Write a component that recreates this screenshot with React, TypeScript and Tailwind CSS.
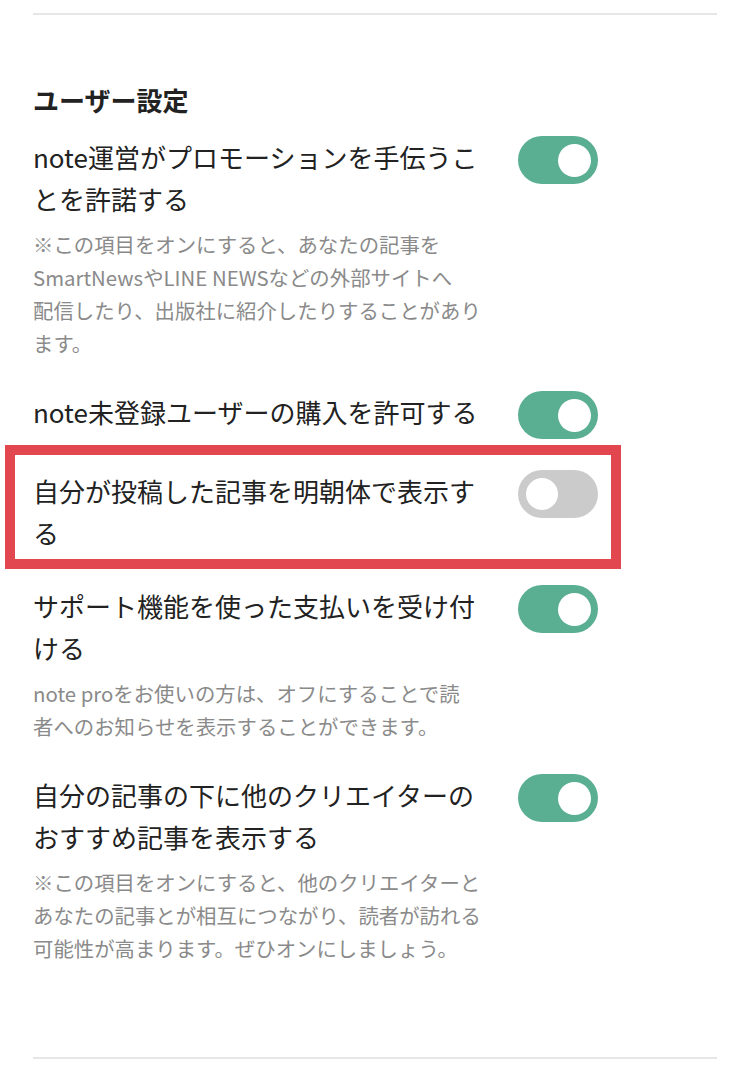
import React from 'react'

interface Setting {
  id: string
  label: string[]
  note?: string[]
  enabled: boolean
  highlighted?: boolean
}

const settings: Setting[] = [
  {
    id: 'promotion',
    label: ['note運営がプロモーションを手伝うこ', 'とを許諾する'],
    note: [
      '※この項目をオンにすると、あなたの記事を',
      'SmartNewsやLINE NEWSなどの外部サイトへ',
      '配信したり、出版社に紹介したりすることがあり',
      'ます。',
    ],
    enabled: true,
  },
  {
    id: 'guest-purchase',
    label: ['note未登録ユーザーの購入を許可する'],
    enabled: true,
  },
  {
    id: 'mincho',
    label: ['自分が投稿した記事を明朝体で表示す', 'る'],
    enabled: false,
    highlighted: true,
  },
  {
    id: 'support',
    label: ['サポート機能を使った支払いを受け付', 'ける'],
    note: ['note proをお使いの方は、オフにすることで読', '者へのお知らせを表示することができます。'],
    enabled: true,
  },
  {
    id: 'recommend',
    label: ['自分の記事の下に他のクリエイターの', 'おすすめ記事を表示する'],
    note: [
      '※この項目をオンにすると、他のクリエイターと',
      'あなたの記事とが相互につながり、読者が訪れる',
      '可能性が高まります。ぜひオンにしましょう。',
    ],
    enabled: true,
  },
]

function Toggle({ on }: { on: boolean }) {
  return (
    <div
      className={`flex h-12 w-20 shrink-0 items-center rounded-full ${
        on ? 'justify-end bg-[#5aae92] pr-[7px]' : 'justify-start bg-[#cbcbcb] pl-2'
      }`}
    >
      <div className={`rounded-full bg-white ${on ? 'size-[33px]' : 'size-8'}`} />
    </div>
  )
}

export default function App() {
  return (
    <div
      className="min-h-[1068px] w-[750px] bg-white px-[33px] pt-[13px]"
      style={{ fontFamily: '"Noto Sans CJK JP", "Noto Sans", sans-serif' }}
    >
      <div className="h-[2px] bg-[#e6e6e6]" />

      <h2 className="mt-[67px] text-[26px] font-bold leading-[36px] text-[#222]">ユーザー設定</h2>

      {/* Settings list */}
      <div className="mt-[18px] flex flex-col gap-[31px]">
        {settings.map((s) => (
          <div key={s.id} className="relative flex items-start">
            <div className="w-[485px] shrink-0">
              <p className="text-[26px] leading-[42px] text-[#222]">
                {s.label.map((line, i) => (
                  <span key={i} className="block whitespace-nowrap">
                    {line}
                  </span>
                ))}
              </p>
              {s.note && (
                <p className="mt-2 text-[20.4px] leading-[33px] text-[#8a8a8a]">
                  {s.note.map((line, i) => (
                    <span key={i} className="block whitespace-nowrap">
                      {line}
                    </span>
                  ))}
                </p>
              )}
            </div>
            <Toggle on={s.enabled} />
            {s.highlighted && (
              <div className="pointer-events-none absolute -top-[25px] -left-[28px] h-[124px] w-[616px] border-[10px] border-[#e2464f]" />
            )}
          </div>
        ))}
      </div>

      <div className="mt-[92px] h-[2px] bg-[#e6e6e6]" />
    </div>
  )
}
